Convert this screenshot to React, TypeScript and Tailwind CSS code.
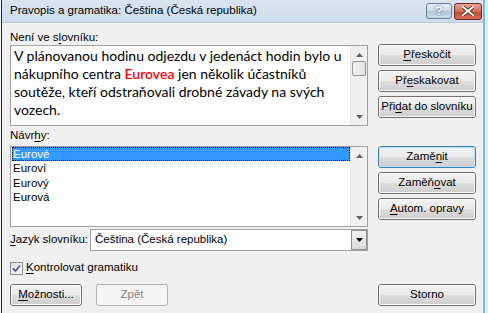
import React from "react";

const ui = { fontFamily: '"Liberation Sans", Arial, sans-serif' };
const body = { fontFamily: 'Lato, "Open Sans", sans-serif' };

const U = ({ children }: { children: React.ReactNode }) => (
  <span className="underline underline-offset-2">{children}</span>
);

const Btn = ({
  children,
  focused,
  disabled,
  className = "",
}: {
  children: React.ReactNode;
  focused?: boolean;
  disabled?: boolean;
  className?: string;
}) => {
  if (disabled) {
    return (
      <div
        className={`h-[22px] rounded-[3px] border border-[#adb2b5] bg-[#f4f4f4] flex items-center justify-center text-[#838383] whitespace-nowrap ${className}`}
      >
        {children}
      </div>
    );
  }
  return (
    <div
      className={`h-[22px] rounded-[3px] border ${
        focused ? "border-[#3c7fb1]" : "border-[#707070]"
      } ${className}`}
    >
      <div
        className={`h-full rounded-[2px] flex items-center justify-center text-black whitespace-nowrap border ${
          focused ? "border-[#b6e4f7]" : "border-[#fbfbfb]"
        } bg-[linear-gradient(#f2f2f2_0%,#ebebeb_48%,#dddddd_52%,#cfcfcf_100%)]`}
      >
        {children}
      </div>
    </div>
  );
};

const ScrollArrow = ({ up }: { up?: boolean }) => (
  <div className="h-[17px] flex items-center justify-center">
    <svg width="7" height="4" viewBox="0 0 7 4">
      {up ? (
        <path d="M0 4 L3.5 0 L7 4 Z" fill="#606060" />
      ) : (
        <path d="M0 0 L3.5 4 L7 0 Z" fill="#606060" />
      )}
    </svg>
  </div>
);

const ScrollBar = ({ thumb }: { thumb?: boolean }) => (
  <div className="w-[17px] flex flex-col bg-[#f0f0f0] border-l border-[#e6e6e6]">
    <ScrollArrow up />
    <div className="flex-1 px-px">
      {thumb && (
        <div className="mt-[-2px] h-[15px] rounded-[2px] border border-[#979797] bg-[linear-gradient(90deg,#f3f3f3,#e2e2e2)]" />
      )}
    </div>
    <ScrollArrow />
  </div>
);

export default function App() {
  return (
    <div
      className="w-[488px] h-[313px] bg-[#f0f0f0] text-[11.5px] text-black relative overflow-hidden"
      style={ui}
    >
      {/* frame */}
      <div className="absolute left-0 top-0 bottom-0 w-[2px] bg-[#f4f7fa] border-r border-[#1e2a38]" />
      <div className="absolute right-0 top-0 bottom-0 w-[5px] bg-[#dff0fb] border-l-[2px] border-[#6ec0ec]" />

      {/* title bar */}
      <div className="h-[23px] ml-[2px] mr-[5px] bg-[linear-gradient(#dbe5f0,#cddbea)] border-b border-[#b9c7d6] flex items-center pl-[8px] pr-[1px]">
        <span className="text-[11.5px] text-black flex-1 whitespace-nowrap">
          Pravopis a gramatika: Čeština (Česká republika)
        </span>
        <div className="w-[26px] h-[16px] rounded-[3px] border border-[#6d7f96] bg-[linear-gradient(#e6eef7_0%,#cad8e8_50%,#b4c6db_51%,#c8d8ea_100%)] flex items-center justify-center text-[13px] font-bold text-white [text-shadow:0_0_2px_#334]">
          ?
        </div>
        <div className="ml-[2px] w-[28px] h-[17px] rounded-[3px] border border-[#6e2a24] bg-[linear-gradient(#e8a493_0%,#d3725c_50%,#c2442c_51%,#d4705a_100%)] flex items-center justify-center">
          <svg width="12" height="10" viewBox="0 0 12 10">
            <path
              d="M1 1 L11 9 M11 1 L1 9"
              stroke="#3a1a14"
              strokeWidth="3.4"
              strokeLinecap="square"
            />
            <path
              d="M1 1 L11 9 M11 1 L1 9"
              stroke="#ffffff"
              strokeWidth="2"
              strokeLinecap="square"
            />
          </svg>
        </div>
      </div>

      {/* client */}
      <div className="pl-[10px] pr-[12px] pt-[6px]">
        <div className="h-[16px] leading-[16px] whitespace-nowrap">
          Není ve s<U>l</U>ovníku:
        </div>
        <div className="flex gap-[10px]">
          <div className="w-[358px] h-[81px] border border-[#a0a0a0] bg-white flex">
            <p
              className="flex-1 pl-[3px] pt-[1px] text-[14px] leading-[18px] text-black"
              style={body}
            >
              V plánovanou hodinu odjezdu v jedenáct hodin bylo u nákupního centra{" "}
              <span className="text-[#ff0000] font-semibold">Eurovea</span> jen několik
              účastníků soutěže, kteří odstraňovali drobné závady na svých vozech.
            </p>
            <ScrollBar thumb />
          </div>
          <div className="w-[98px] flex flex-col gap-[4px] -mt-px">
            <Btn>
              <U>P</U>řeskočit
            </Btn>
            <Btn>
              Př<U>e</U>skakovat
            </Btn>
            <Btn>
              Při<U>d</U>at do slovníku
            </Btn>
          </div>
        </div>

        <div className="h-[16px] leading-[16px] mt-[1px] whitespace-nowrap">
          Návr<U>h</U>y:
        </div>
        <div className="flex gap-[10px] mt-[3px]">
          <div className="w-[358px] h-[81px] border border-[#a0a0a0] bg-white flex">
            <div className="flex-1 pl-px leading-[14.3px]">
              <div className="bg-[#3399ff] text-white outline outline-1 outline-dotted outline-[#000] -outline-offset-1 pl-px">
                Eurové
              </div>
              <div className="pl-px">Euroví</div>
              <div className="pl-px">Eurový</div>
              <div className="pl-px">Eurová</div>
            </div>
            <ScrollBar />
          </div>
          <div className="w-[98px] flex flex-col gap-[4px]">
            <Btn focused>
              Zamě<U>n</U>it
            </Btn>
            <Btn>
              Zaměň<U>o</U>vat
            </Btn>
            <Btn>
              <U>A</U>utom. opravy
            </Btn>
          </div>
        </div>

        <div className="flex items-center mt-[2px] w-[358px]">
          <span className="w-[80px] whitespace-nowrap">
            <U>J</U>azyk slovníku:
          </span>
          <div className="flex-1 h-[22px] border border-[#a0a0a0] bg-white flex items-center">
            <span className="flex-1 pl-[4px] whitespace-nowrap">Čeština (Česká republika)</span>
            <div className="w-[16px] h-[20px] border border-[#8f8f8f] bg-[linear-gradient(#f2f2f2,#d9d9d9)] flex items-center justify-center">
              <svg width="7" height="4" viewBox="0 0 7 4">
                <path d="M0 0 L3.5 4 L7 0 Z" fill="#000" />
              </svg>
            </div>
          </div>
        </div>

        <div className="flex items-center mt-[9px] h-[16px] gap-[3px]">
          <div className="w-[13px] h-[13px] border border-[#8e8f8f] bg-[linear-gradient(135deg,#dcdcdc,#fdfdfd)] flex items-center justify-center">
            <svg width="9" height="9" viewBox="0 0 9 9">
              <path
                d="M1 4.5 L3.5 7 L8 1.5"
                stroke="#4a5f97"
                strokeWidth="1.8"
                fill="none"
              />
            </svg>
          </div>
          <span className="whitespace-nowrap">
            <U>K</U>ontrolovat gramatiku
          </span>
        </div>

        <div className="flex mt-[8px]">
          <Btn className="w-[72px]">
            <U>M</U>ožnosti...
          </Btn>
          <Btn disabled className="w-[72px] ml-[14px]">
            Zpět
          </Btn>
          <div className="flex-1" />
          <Btn className="w-[98px]">Storno</Btn>
        </div>
      </div>
    </div>
  );
}
